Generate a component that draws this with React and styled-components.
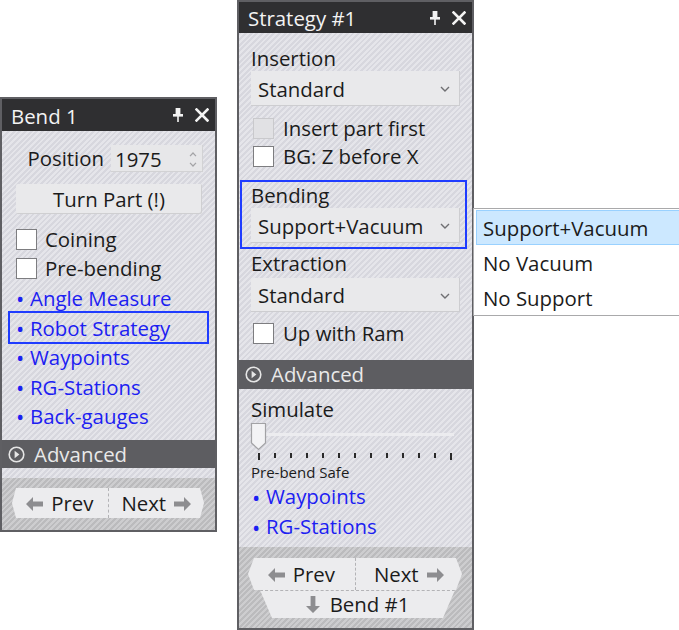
import React from 'react';
import styled, { createGlobalStyle } from 'styled-components';

const Global = createGlobalStyle`
  html, body { margin: 0; padding: 0; background: #ffffff; overflow: hidden; }
  body { font-family: "Open Sans", "Noto Sans", sans-serif; }
`;

const bodyStripes = 'repeating-linear-gradient(135deg, #d7d7de 0 2px, #e5e5ea 2px 4px)';
const footStripes = 'repeating-linear-gradient(135deg, #bbbbbd 0 2px, #cdcdcf 2px 4px)';

const Root = styled.div`
  position: relative;
  width: 679px;
  height: 630px;
  display: flex;
  align-items: flex-start;
  gap: 20px;
  overflow: hidden;
  color: #1b1b1b;
  font-family: "Open Sans", "Noto Sans", sans-serif;
  font-size: 20.4px;
`;

const Panel = styled.div`
  box-sizing: border-box;
  width: ${p => p.$w}px;
  margin-top: ${p => p.$top || 0}px;
  border: 2px solid #5f5f63;
  display: flex;
  flex-direction: column;
  background: #5f5f63;
`;

const Header = styled.div`
  height: ${p => p.$h}px;
  background: #2f2f31;
  color: #f3f3f3;
  display: flex;
  align-items: center;
  justify-content: space-between;
  padding: 0 6px 0 9px;
  flex: none;
`;

const Title = styled.span`
  font-size: 20.4px;
  line-height: 1;
  padding-top: 2px;
`;

const HeaderIcons = styled.div`
  display: flex;
  align-items: center;
  gap: 12px;
`;

const Body = styled.div`
  background: ${bodyStripes};
  display: flex;
  flex-direction: column;
  padding: ${p => p.$pad};
  height: ${p => p.$h}px;
  box-sizing: border-box;
  flex: none;
`;

const Footer = styled.div`
  background: ${footStripes};
  display: flex;
  flex-direction: column;
  align-items: flex-start;
  padding: ${p => p.$pad};
  height: ${p => p.$h}px;
  box-sizing: border-box;
  flex: none;
`;

const AdvancedBar = styled.div`
  height: ${p => p.$h}px;
  background: #5d5d61;
  color: #e9e9e9;
  display: flex;
  align-items: center;
  gap: 9px;
  padding-left: ${p => p.$pl}px;
  font-size: 20.4px;
  line-height: 1;
  flex: none;
`;

const PositionRow = styled.div`
  display: flex;
  justify-content: flex-end;
  align-items: center;
  gap: 7px;
  padding-right: 12px;
  line-height: 1;
`;

const Spin = styled.div`
  width: 92px;
  height: 27px;
  box-sizing: border-box;
  background: #e7e7e9;
  box-shadow: inset -1px -1px 0 #d2d2d4;
  display: flex;
  align-items: center;
  justify-content: space-between;
  padding: 1px 6px 0 4px;
`;

const SpinArrows = styled.div`
  display: flex;
  flex-direction: column;
  gap: 5px;
`;

const PushButton = styled.div`
  height: 30px;
  margin: 12px 13px 0 14px;
  padding-top: 1px;
  box-sizing: border-box;
  background: #e9e9eb;
  border-radius: 2px;
  box-shadow: inset -1px -1px 0 #cfcfd1;
  display: flex;
  align-items: center;
  justify-content: center;
  line-height: 1;
`;

const CheckRow = styled.div`
  height: ${p => p.$h}px;
  display: flex;
  align-items: center;
  gap: ${p => p.$gap}px;
  padding-left: ${p => p.$pl}px;
  margin-top: ${p => p.$mt || 0}px;
  line-height: 1;
  flex: none;
`;

const Box = styled.div`
  width: 21px;
  height: 21px;
  box-sizing: border-box;
  background: ${p => (p.$disabled ? '#e1e1e4' : '#ffffff')};
  border: 1px solid ${p => (p.$disabled ? '#c9c9cc' : '#7d7d80')};
`;

const LinkRow = styled.div`
  height: ${p => p.$h}px;
  margin: 0 ${p => p.$mx}px;
  padding-left: ${p => p.$pl}px;
  padding-top: 1px;
  box-sizing: border-box;
  display: flex;
  align-items: center;
  color: #1c20f2;
  line-height: 1;
  flex: none;
  outline: ${p => (p.$hl ? '2px solid #1f3cff' : 'none')};
`;

const Bullet = styled.span`
  display: inline-block;
  width: 14px;
  font-size: 22px;
`;

const Label = styled.div`
  height: 26px;
  line-height: 27px;
  margin-top: ${p => p.$mt || 0}px;
  flex: none;
`;

const Select = styled.div`
  height: ${p => p.$h || 35}px;
  margin-top: ${p => p.$mt || 0}px;
  box-sizing: border-box;
  background: #e9e9eb;
  box-shadow: inset -1px -1px 0 #cdcdd0;
  display: flex;
  align-items: center;
  justify-content: space-between;
  padding: 1px 10px 0 7px;
  line-height: 1;
  flex: none;
`;

const BendGroup = styled.div`
  margin: 9.5px -7px 0 -11px;
  border: 2px solid #1f3cff;
  padding: 0 5px 4px 9px;
  display: flex;
  flex-direction: column;
  flex: none;
`;

const Slider = styled.div`
  position: relative;
  height: 28px;
  flex: none;
`;

const Track = styled.div`
  position: absolute;
  left: 6px;
  right: 6px;
  top: 11px;
  height: 3px;
  background: #ececef;
`;

const Thumb = styled.svg`
  position: absolute;
  left: -1px;
  top: 0;
`;

const Ticks = styled.div`
  display: flex;
  justify-content: space-between;
  align-items: flex-start;
  margin: 3px 8px 0 7px;
  height: 7px;
  flex: none;
`;

const Tick = styled.div`
  width: 2px;
  height: ${p => (p.$long ? 7 : 5)}px;
  background: #2a2a2a;
`;

const SmallText = styled.div`
  font-size: 15px;
  line-height: 18px;
  margin-top: 3px;
  flex: none;
`;

const NavRow = styled.div`
  width: ${p => p.$w}px;
  height: ${p => p.$h}px;
  margin-left: ${p => p.$ml}px;
  display: flex;
  background: #ececee;
  clip-path: polygon(${p => p.$i}px 0, calc(100% - ${p => p.$i}px) 0, 100% 50%, calc(100% - ${p => p.$i}px) 100%, ${p => p.$i}px 100%, 0 50%);
  flex: none;
`;

const NavButton = styled.div`
  flex: 1;
  display: flex;
  align-items: center;
  justify-content: center;
  gap: 8px;
  padding-top: 1px;
  line-height: 1;
  border-left: ${p => (p.$divider ? '1px dashed #b3b3b6' : 'none')};
`;

const BendRow = styled.div`
  width: 195px;
  height: 28px;
  margin-left: 21px;
  background: #ececee;
  border-top: 1px dashed #b3b3b6;
  box-sizing: border-box;
  display: flex;
  align-items: center;
  justify-content: center;
  gap: 10px;
  line-height: 1;
  clip-path: polygon(0 0, 100% 0, calc(100% - 12px) 100%, 12px 100%);
  flex: none;
`;

const Popup = styled.div`
  position: absolute;
  left: 473px;
  top: 208px;
  width: 220px;
  box-sizing: border-box;
  background: #ffffff;
  border: 1px solid #a9a9ab;
  padding: 1px 2px 0 2px;
  display: flex;
  flex-direction: column;
`;

const PopupItem = styled.div`
  height: 35px;
  box-sizing: border-box;
  display: flex;
  align-items: center;
  padding: 1px 0 0 6px;
  line-height: 1;
  background: ${p => (p.$active ? '#cce8ff' : 'transparent')};
  border: 1px solid ${p => (p.$active ? '#99d1ff' : 'transparent')};
`;

const PinIcon = () => (
  <svg width="10" height="14" viewBox="0 0 10 14">
    <rect x="2.6" y="0" width="4.8" height="6.5" fill="#f3f3f3" />
    <rect x="0" y="6" width="10" height="2.6" fill="#f3f3f3" />
    <rect x="4.2" y="8" width="1.6" height="6" fill="#f3f3f3" />
  </svg>
);

const CloseIcon = () => (
  <svg width="14" height="14" viewBox="0 0 14 14">
    <path d="M1.5 1.5 L12.5 12.5 M12.5 1.5 L1.5 12.5" stroke="#f3f3f3" strokeWidth="2.6" strokeLinecap="square" />
  </svg>
);

const AdvancedIcon = () => (
  <svg width="17" height="17" viewBox="0 0 17 17">
    <circle cx="8.5" cy="8.5" r="7.3" fill="none" stroke="#e6e6e6" strokeWidth="1.6" />
    <path d="M6.6 4.8 L11.4 8.5 L6.6 12.2 Z" fill="#e6e6e6" />
  </svg>
);

const Chevron = () => (
  <svg width="10" height="6" viewBox="0 0 10 6">
    <path d="M1 1 L5 5 L9 1" fill="none" stroke="#6f6f72" strokeWidth="1.4" />
  </svg>
);

const SpinUp = () => (
  <svg width="8" height="5" viewBox="0 0 8 5">
    <path d="M1 4.2 L4 1 L7 4.2" fill="none" stroke="#a3a3a6" strokeWidth="1.2" />
  </svg>
);

const SpinDown = () => (
  <svg width="8" height="5" viewBox="0 0 8 5">
    <path d="M1 0.8 L4 4 L7 0.8" fill="none" stroke="#a3a3a6" strokeWidth="1.2" />
  </svg>
);

const ArrowLeft = () => (
  <svg width="17" height="14" viewBox="0 0 17 14">
    <path d="M0 7 L7 0 V4.6 H17 V9.4 H7 V14 Z" fill="#8d8d90" />
  </svg>
);

const ArrowRight = () => (
  <svg width="17" height="14" viewBox="0 0 17 14">
    <path d="M17 7 L10 0 V4.6 H0 V9.4 H10 V14 Z" fill="#8d8d90" />
  </svg>
);

const ArrowDown = () => (
  <svg width="14" height="17" viewBox="0 0 14 17">
    <path d="M7 17 L0 10 H4.6 V0 H9.4 V10 H14 Z" fill="#8d8d90" />
  </svg>
);

const Link = ({ children, hl, h, mx, pl }) => (
  <LinkRow $hl={hl} $h={h} $mx={mx} $pl={pl}>
    <Bullet>•</Bullet>
    {children}
  </LinkRow>
);

const PanelHeader = ({ title, h }) => (
  <Header $h={h}>
    <Title>{title}</Title>
    <HeaderIcons>
      <PinIcon />
      <CloseIcon />
    </HeaderIcons>
  </Header>
);

const BendPanel = () => (
  <Panel $w={217} $top={97}>
    <PanelHeader title="Bend 1" h={32} />
    <Body $h={309} $pad="14px 0 9px">
      <PositionRow>
        <span>Position</span>
        <Spin>
          <span>1975</span>
          <SpinArrows>
            <SpinUp />
            <SpinDown />
          </SpinArrows>
        </Spin>
      </PositionRow>
      <PushButton>Turn Part (!)</PushButton>
      <CheckRow $h={29} $gap={8} $pl={14} $mt={11}>
        <Box />
        <span>Coining</span>
      </CheckRow>
      <CheckRow $h={29} $gap={8} $pl={14}>
        <Box />
        <span>Pre-bending</span>
      </CheckRow>
      <Link h={29.5} mx={8} pl={6}>Angle Measure</Link>
      <Link h={29.5} mx={8} pl={6} hl>Robot Strategy</Link>
      <Link h={29.5} mx={8} pl={6}>Waypoints</Link>
      <Link h={29.5} mx={8} pl={6}>RG-Stations</Link>
      <Link h={29.5} mx={8} pl={6}>Back-gauges</Link>
    </Body>
    <AdvancedBar $h={28} $pl={6}>
      <AdvancedIcon />
      <span>Advanced</span>
    </AdvancedBar>
    <Body $h={10} $pad="0" />
    <Footer $h={52} $pad="10px 0 0">
      <NavRow $w={192} $h={30} $ml={10} $i={4}>
        <NavButton>
          <ArrowLeft />
          <span>Prev</span>
        </NavButton>
        <NavButton $divider>
          <span>Next</span>
          <ArrowRight />
        </NavButton>
      </NavRow>
    </Footer>
  </Panel>
);

const StrategyPanel = () => (
  <Panel $w={237}>
    <PanelHeader title="Strategy #1" h={31} />
    <Body $h={327} $pad="12px 12px 0 12px">
      <Label>Insertion</Label>
      <Select>
        <span>Standard</span>
        <Chevron />
      </Select>
      <CheckRow $h={28} $gap={9} $pl={2} $mt={8.5}>
        <Box $disabled />
        <span>Insert part first</span>
      </CheckRow>
      <CheckRow $h={28} $gap={9} $pl={2}>
        <Box />
        <span>BG: Z before X</span>
      </CheckRow>
      <BendGroup>
        <Label>Bending</Label>
        <Select>
          <span>Support+Vacuum</span>
          <Chevron />
        </Select>
      </BendGroup>
      <Label $mt={1}>Extraction</Label>
      <Select $h={34} $mt={2}>
        <span>Standard</span>
        <Chevron />
      </Select>
      <CheckRow $h={28} $gap={9} $pl={2} $mt={7.5}>
        <Box />
        <span>Up with Ram</span>
      </CheckRow>
    </Body>
    <AdvancedBar $h={29} $pl={6}>
      <AdvancedIcon />
      <span>Advanced</span>
    </AdvancedBar>
    <Body $h={158} $pad="7px 12px 0 12px">
      <Label>Simulate</Label>
      <Slider>
        <Track />
        <Thumb width="17" height="29" viewBox="0 0 17 29">
          <path d="M1.5 1.5 H15.5 V21 L8.5 27.5 L1.5 21 Z" fill="#f3f3f5" stroke="#a2a2a5" strokeWidth="1.2" />
        </Thumb>
      </Slider>
      <Ticks>
        {Array.from({ length: 13 }, (_, i) => (
          <Tick key={i} $long={i === 0 || i === 12} />
        ))}
      </Ticks>
      <SmallText>Pre-bend Safe</SmallText>
      <Link h={30} mx={0} pl={1}>Waypoints</Link>
      <Link h={30} mx={0} pl={1}>RG-Stations</Link>
    </Body>
    <Footer $h={81} $pad="11px 0 0">
      <NavRow $w={214} $h={32} $ml={9} $i={6}>
        <NavButton>
          <ArrowLeft />
          <span>Prev</span>
        </NavButton>
        <NavButton $divider>
          <span>Next</span>
          <ArrowRight />
        </NavButton>
      </NavRow>
      <BendRow>
        <ArrowDown />
        <span>Bend #1</span>
      </BendRow>
    </Footer>
  </Panel>
);

export default function App() {
  return (
    <>
      <Global />
      <Root>
        <BendPanel />
        <StrategyPanel />
        <Popup>
          <PopupItem $active>Support+Vacuum</PopupItem>
          <PopupItem>No Vacuum</PopupItem>
          <PopupItem>No Support</PopupItem>
        </Popup>
      </Root>
    </>
  );
}
